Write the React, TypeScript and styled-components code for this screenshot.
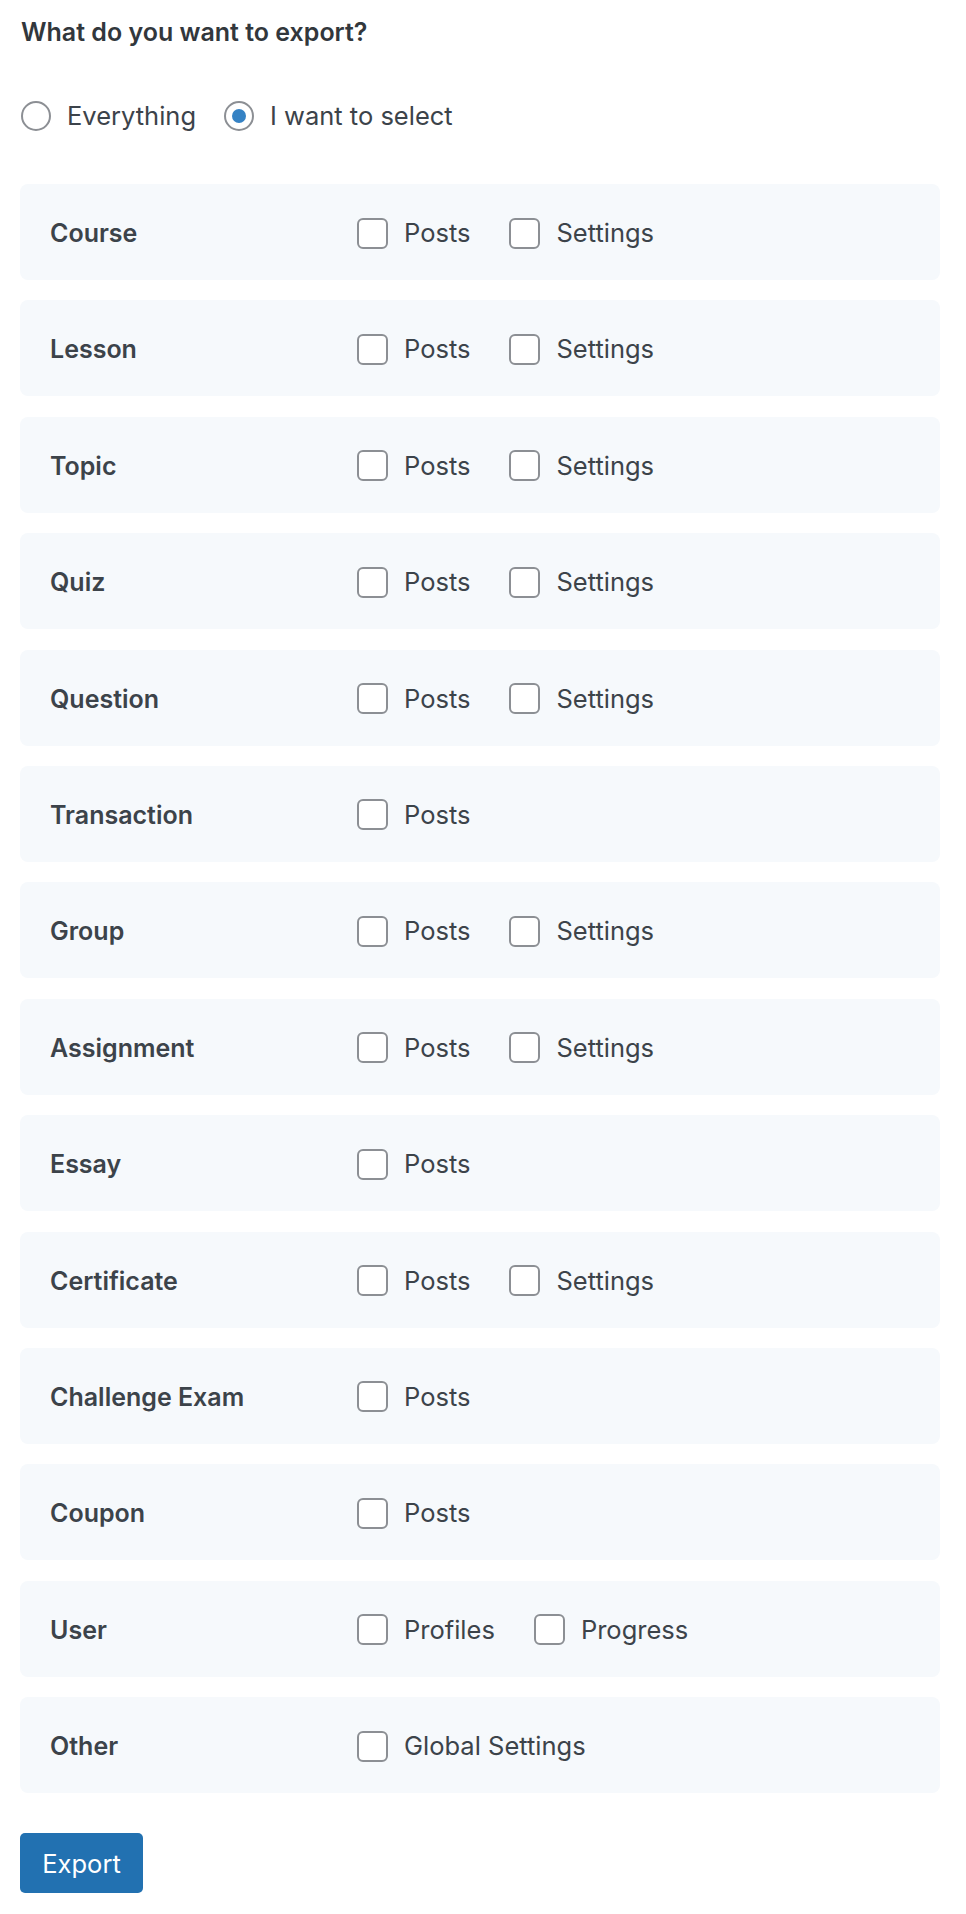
import React, { FC, useState } from 'react'
import styled, { createGlobalStyle } from 'styled-components'

interface ExportGroup {
  name: string
  options: string[]
}

const GROUPS: ExportGroup[] = [
  { name: 'Course', options: ['Posts', 'Settings'] },
  { name: 'Lesson', options: ['Posts', 'Settings'] },
  { name: 'Topic', options: ['Posts', 'Settings'] },
  { name: 'Quiz', options: ['Posts', 'Settings'] },
  { name: 'Question', options: ['Posts', 'Settings'] },
  { name: 'Transaction', options: ['Posts'] },
  { name: 'Group', options: ['Posts', 'Settings'] },
  { name: 'Assignment', options: ['Posts', 'Settings'] },
  { name: 'Essay', options: ['Posts'] },
  { name: 'Certificate', options: ['Posts', 'Settings'] },
  { name: 'Challenge Exam', options: ['Posts'] },
  { name: 'Coupon', options: ['Posts'] },
  { name: 'User', options: ['Profiles', 'Progress'] },
  { name: 'Other', options: ['Global Settings'] },
]

const GlobalStyle = createGlobalStyle`
  body {
    margin: 0;
    background: #fff;
    font-family: Inter, "Noto Sans", "Liberation Sans", sans-serif;
    color: #3c434a;
  }
`

const App: FC = () => {
  const [mode, setMode] = useState<'all' | 'select'>('select')
  const [checked, setChecked] = useState<Record<string, boolean>>({})

  const toggle = (key: string) =>
    setChecked((prev) => ({ ...prev, [key]: !prev[key] }))

  return (
    <S.Page>
      <GlobalStyle />
      <S.Heading>What do you want to export?</S.Heading>

      <S.RadioGroup>
        <S.Choice>
          <S.Radio
            type="radio"
            name="export-mode"
            checked={mode === 'all'}
            onChange={() => setMode('all')}
          />
          Everything
        </S.Choice>
        <S.Choice>
          <S.Radio
            type="radio"
            name="export-mode"
            checked={mode === 'select'}
            onChange={() => setMode('select')}
          />
          I want to select
        </S.Choice>
      </S.RadioGroup>

      <S.List>
        {GROUPS.map((group) => (
          <S.Row key={group.name}>
            <S.RowName>{group.name}</S.RowName>
            <S.Options>
              {group.options.map((opt) => {
                const key = `${group.name}-${opt}`
                return (
                  <S.Choice key={key}>
                    <S.Checkbox
                      type="checkbox"
                      checked={!!checked[key]}
                      onChange={() => toggle(key)}
                    />
                    {opt}
                  </S.Choice>
                )
              })}
            </S.Options>
          </S.Row>
        ))}
      </S.List>

      <S.Button type="button">Export</S.Button>
    </S.Page>
  )
}

const S = {
  Page: styled.div`
    padding: 14px 26px 21px 20px;
    width: 920px;
  `,
  Heading: styled.h2`
    margin: 0 0 0 1px;
    font-size: 25px;
    line-height: 36px;
    font-weight: 600;
    color: #32373c;
  `,
  RadioGroup: styled.div`
    display: flex;
    align-items: center;
    gap: 28px;
    margin: 51px 0 0 1px;
    height: 30px;
  `,
  Choice: styled.label`
    display: inline-flex;
    align-items: center;
    gap: 16px;
    font-size: 25.5px;
    line-height: 32px;
    color: #3c434a;
    cursor: pointer;
  `,
  Radio: styled.input`
    appearance: none;
    margin: 0;
    width: 30px;
    height: 30px;
    border: 2px solid #8c8f94;
    border-radius: 50%;
    background: #fff;
    display: grid;
    place-items: center;
    box-sizing: border-box;

    &:checked::before {
      content: '';
      width: 14px;
      height: 14px;
      border-radius: 50%;
      background: #3582c4;
    }
  `,
  List: styled.div`
    display: flex;
    flex-direction: column;
    gap: 20.4px;
    margin-top: 53px;
  `,
  Row: styled.div`
    display: flex;
    align-items: center;
    height: 96px;
    padding: 2px 0 0 30px;
    box-sizing: border-box;
    background: #f6f9fc;
    border-radius: 8px;
  `,
  RowName: styled.div`
    width: 307px;
    flex-shrink: 0;
    font-size: 25px;
    font-weight: 600;
    color: #3c434a;
  `,
  Options: styled.div`
    display: flex;
    align-items: center;
    gap: 39px;
  `,
  Checkbox: styled.input`
    appearance: none;
    margin: 0;
    width: 31px;
    height: 31px;
    border: 2px solid #8c8f94;
    border-radius: 6px;
    background: #fff;
    box-sizing: border-box;
  `,
  Button: styled.button`
    margin-top: 40px;
    width: 123px;
    height: 60px;
    border: none;
    border-radius: 5px;
    background: #2271b1;
    color: #fff;
    font-family: inherit;
    font-size: 25.5px;
    cursor: pointer;
  `,
}

export default App
